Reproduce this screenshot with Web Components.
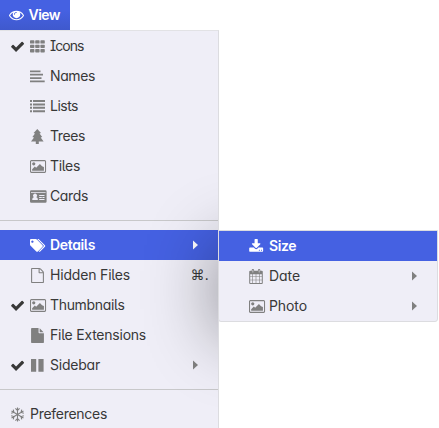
<!DOCTYPE html>
<html lang="en"><head><meta charset="utf-8"><title>View menu</title>
<style>
body{margin:0;background:#fff;width:439px;height:428px;overflow:hidden;position:relative;font:14px/30px Inter,"Liberation Sans",sans-serif;font-feature-settings:"cv11","cv05";color:#383838}
menu-panel.sub{position:absolute;left:218px;top:230px;--w:218px}
</style></head><body>
<menu-title icon="eye" fit="31.500">View</menu-title>
<menu-panel class="main">
<menu-item checked icon="th" fit="33.500" style="font-feature-settings:'cv11','cv05','cv08'">Icons</menu-item>
<menu-item icon="align" fit="45">Names</menu-item>
<menu-item icon="list" fit="28">Lists</menu-item>
<menu-item icon="tree" fit="35">Trees</menu-item>
<menu-item icon="image" fit="30">Tiles</menu-item>
<menu-item icon="card" fit="38">Cards</menu-item>
<menu-rule></menu-rule>
<menu-item active arrow icon="tags" fit="45">Details</menu-item>
<menu-item icon="fileo" key="⌘." fit="80">Hidden Files</menu-item>
<menu-item checked icon="image" fit="74.500">Thumbnails</menu-item>
<menu-item icon="file" fit="96">File Extensions</menu-item>
<menu-item checked arrow icon="columns" fit="50">Sidebar</menu-item>
<menu-rule></menu-rule>
<menu-item flush icon="snow" fit="77">Preferences</menu-item>
</menu-panel>
<menu-panel class="sub">
<menu-item active icon="download" fit="27">Size</menu-item>
<menu-item arrow icon="calendar" fit="31">Date</menu-item>
<menu-item arrow icon="image" fit="38">Photo</menu-item>
</menu-panel>
<script>
const FA='<g transform="scale(.00837)">';
const icons={
eye:FA+'<path transform="translate(0 -64)" d="M1664 960q-152-236-381-353 61 104 61 225 0 185-131.5 316.5t-316.5 131.5-316.5-131.5-131.5-316.5q0-121 61-225-229 117-381 353 133 205 333.5 326.5t434.5 121.5 434.5-121.5 333.5-326.5zm-720-384q0-20-14-34t-34-14q-125 0-214.5 89.5t-89.5 214.5q0 20 14 34t34 14 34-14 14-34q0-86 61-147t147-61q20 0 34-14t14-34zm848 384q0 34-20 69-140 230-376.5 368.5t-499.5 138.5-499.5-139-376.5-368q-20-35-20-69t20-69q140-229 376.5-368t499.5-139 499.5 139 376.5 368q20 35 20 69z"/></g>',
check:FA+'<path transform="translate(10 0)" d="M1671 566q0 40-28 68l-724 724-136 136q-28 28-68 28t-68-28l-136-136-362-362q-28-28-28-68t28-68l136-136q28-28 68-28t68 28l294 295 656-657q28-28 68-28t68 28l136 136q28 28 28 68z"/></g>',
th:[1.3,5.7,10.1].map(y=>[0,5.2,10.4].map(x=>`<rect x="${x}" y="${y}" width="4.4" height="3.300" rx=".7"/>`).join('')).join(''),
align:'<path d="M0 1.500h10.500v1.800H0zM0 4.800h13v1.800H0zM0 8.200h11.500v1.800H0zM0 11.500h14.700v1.800H0z"/>',
list:[1,4.400,7.800,11.200].map(y=>`<path d="M0 ${y}h2v2H0zM3 ${y}h12v2H3z"/>`).join(''),
tree:'<path d="M7.300 0 11 4.100 9.600 4.600 12.200 8 10.700 8.500 13.600 12.500H8.800V15H5.800v-2.500H1L4 8.500 2.400 8 5 4.600 3.600 4.100Z"/>',
image:FA+'<path transform="translate(64 0)" d="M576 576q0 80-56 136t-136 56-136-56-56-136 56-136 136-56 136 56 56 136zm1024 384v448h-1408v-192l320-320 160 160 448-448 256 256zm96-704h-1600q-13 0-22.5 9.5t-9.5 22.5v1216q0 13 9.5 22.5t22.5 9.5h1600q13 0 22.5-9.5t9.5-22.5v-1216q0-13-9.500-22.500t-22.500-9.500zm160 32v1216q0 66-47 113t-113 47h-1600q-66 0-113-47t-47-113v-1216q0-66 47-113t113-47h1600q66 0 113 47t47 113z"/></g>',
card:'<path fill-rule="evenodd" d="M1.200 1.300h14.200q1.200 0 1.200 1.200v10q0 1.200-1.200 1.200H1.200Q0 13.700 0 12.500v-10Q0 1.300 1.200 1.300zM1 3v.8h14.600V3zM2.200 11h5.700q0-2.500-1.600-2.800a2 2 0 1 0-2.500 0Q2.200 8.500 2.200 11zM9.200 6v1h5.300V6zM9.200 8v1h2.600V8zM12.400 8v1h2.100V8zM9.200 10v1h5.300v-1z"/>',
tags:'<path fill-rule="evenodd" d="M1 1.100h4.700q.7 0 1.200.5l5.600 5.600q.8.800 0 1.600l-4.600 4.600q-.8.700-1.600 0L.6 7.800Q0 7.200 0 6.500V2.100Q0 1.100 1 1.100zM2.400 2.400a1.150 1.150 0 1 0 .01 0z"/><path d="M7.300 1.100h1.300l6.300 6.100q.8.800 0 1.600l-4.700 4.600q-.7.700-1.500 0l5-5.100q.3-.3 0-.7z"/>',
fileo:FA+'<path d="M1596 380q28 28 48 76t20 88v1152q0 40-28 68t-68 28h-1344q-40 0-68-28t-28-68v-1600q0-40 28-68t68-28h896q40 0 88 20t76 48zm-444-244v376h376q-10-29-22-41l-313-313q-12-12-41-22zm384 1528v-1024h-416q-40 0-68-28t-28-68v-416h-768v1536h1280z"/></g>',
file:FA+'<path d="M1152 512v-472q22 14 36 28l408 408q14 14 28 36h-472zm-128 32q0 40 28 68t68 28h544v1056q0 40-28 68t-68 28h-1344q-40 0-68-28t-28-68v-1600q0-40 28-68t68-28h800v544z"/></g>',
columns:'<path d="M1 1h5.200v12.700H1zM8.400 1h5.200v12.700H8.400z"/>',
snow:'<g fill="none" stroke="currentColor" stroke-width="1.100" transform="translate(7.500 7.500)">'+[0,60,120,180,240,300].map(a=>`<path transform="rotate(${a})" d="M0 0V-6.900M-2.100-6.100 0-4.100 2.100-6.100"/>`).join('')+'</g>',
download:FA+'<path transform="translate(-40 0)" d="M1344 1344q0-26-19-45t-45-19-45 19-19 45 19 45 45 19 45-19 19-45zm256 0q0-26-19-45t-45-19-45 19-19 45 19 45 45 19 45-19 19-45zm128-224v320q0 40-28 68t-68 28h-1472q-40 0-68-28t-28-68v-320q0-40 28-68t68-28h465l135 136q58 56 136 56t136-56l136-136h464q40 0 68 28t28 68zm-325-569q17 41-14 70l-448 448q-18 19-45 19t-45-19l-448-448q-31-29-14-70 17-39 59-39h256v-448q0-26 19-45t45-19h256q26 0 45 19t19 45v448h256q42 0 59 39z"/></g>',
calendar:'<path fill-rule="evenodd" d="M1.200 1.800h1.500V1q0-1 1.200-1t1.200 1v.8h3.800V1q0-1 1.200-1t1.200 1v.8h1.500q1 0 1 1V14q0 1-1 1H1.200q-1 0-1-1V2.800q0-1 1-1zM1.200 5.300v2.200h2.200V5.300zM4 5.300v2.200h2.700V5.300zM7.300 5.300v2.200H10V5.300zM10.600 5.300v2.200h2.200V5.300zM1.200 8.100v2.600h2.200V8.100zM4 8.100v2.600h2.700V8.100zM7.300 8.100v2.600H10V8.100zM10.600 8.100v2.600h2.200V8.100zM1.200 11.300V14h2.200v-2.700zM4 11.300V14h2.700v-2.700zM7.300 11.300V14H10v-2.700zM10.600 11.300V14h2.200v-2.700zM3.600 1v2.500h.6V1zM9.800 1v2.500h.6V1z"/>'
};
const draw=(n,c='')=>`<svg class="${c}" width="17" height="15" viewBox="0 0 17 15" fill="currentColor">${icons[n]||''}</svg>`;
// Spaces the label so that it occupies its "fit" width.
function fitLabel(el){
  const label=el.shadowRoot.querySelector('.label'),n=el.textContent.length;
  label.style.letterSpacing=((+el.getAttribute('fit')-label.getBoundingClientRect().width)/n).toFixed(3)+'px';
}
customElements.define('menu-title',class extends HTMLElement{connectedCallback(){
  this.attachShadow({mode:'open'}).innerHTML=`<style>:host{display:flex;align-items:center;box-sizing:border-box;width:70px;height:30px;padding-left:9px;color:#fff;font-weight:600;background:linear-gradient(#4561e2 35%,#3f59cd)}svg{width:17px;margin-right:2.500px}.label{white-space:nowrap}</style>${draw(this.getAttribute('icon'))}<span class="label"><slot></slot></span>`;fitLabel(this)}});
customElements.define('menu-rule',class extends HTMLElement{connectedCallback(){
  this.attachShadow({mode:'open'}).innerHTML='<style>:host{display:block;height:1px;margin:9px 0;background:#c8c8ca}</style>'}});
customElements.define('menu-item',class extends HTMLElement{connectedCallback(){
  const h=n=>this.hasAttribute(n);
  this.attachShadow({mode:'open'}).innerHTML=`<style>
:host{display:flex;align-items:center;height:30px;padding-left:10px}
:host([active]){background:#4561e2;color:#fff;font-weight:600}
svg{flex:none}.check{width:20px;height:15px;flex:none}.check svg{display:block}
.icon{color:#808080;margin-right:3px}:host([active]) .icon{color:#fff}
.label{white-space:nowrap}.end{margin-left:auto;margin-right:20px;display:flex;color:#808080}
:host([active]) .end{color:#fff}.key{margin-left:auto;margin-right:9px;font-family:"DejaVu Sans",sans-serif;font-size:14px}
</style>${h('flush')?'':`<span class="check">${h('checked')?draw('check'):''}</span>`}${draw(this.getAttribute('icon'),'icon')}<span class="label"><slot></slot></span>${h('arrow')?'<span class="end"><svg width="5" height="10" viewBox="0 0 5 10" fill="currentColor"><path d="M0 .5 5 5 0 9.500z"/></svg></span>':''}${h('key')?`<span class="key">${this.getAttribute('key')}</span>`:''}`;
  fitLabel(this)}});
customElements.define('menu-panel',class extends HTMLElement{connectedCallback(){
  this.attachShadow({mode:'open'}).innerHTML=`<style>
:host{display:block;box-sizing:content-box;width:var(--w,218px);background:#efeef7;border-top:1px solid #e2e2e5;border-right:1px solid #dcdce0;position:relative;overflow:hidden}
:host(.sub){border:1px solid #dcdce0;border-radius:0 0 3px 3px}
:host(.main) .shade{position:absolute;left:218px;top:200px;width:220px;height:90px;box-shadow:0 14px 70px rgba(0,0,0,.44);pointer-events:none}
</style><slot></slot><div class="shade"></div>`}});
</script></body></html>
